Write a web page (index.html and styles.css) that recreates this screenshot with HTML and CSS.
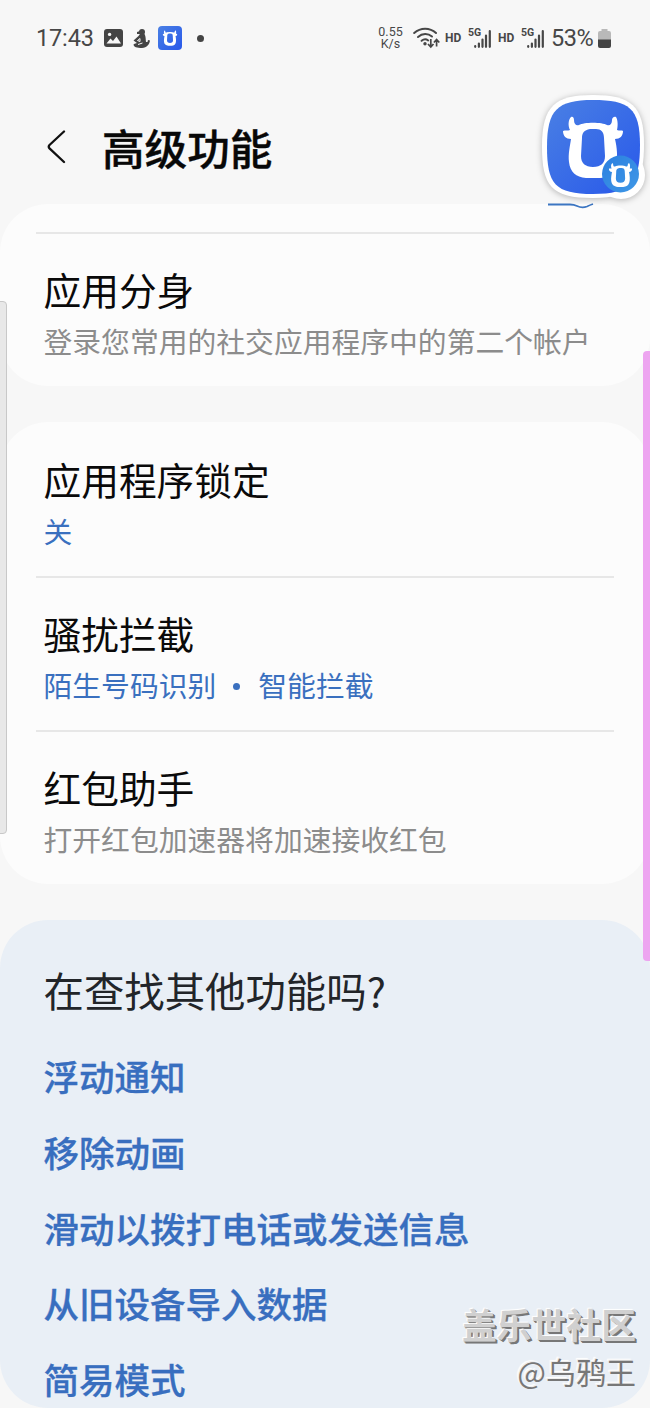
FILE: index.html
```html
<!DOCTYPE html>
<html lang="zh-CN">
<head>
<meta charset="utf-8">
<title>高级功能</title>
<link rel="stylesheet" href="styles.css">
</head>
<body>
<div class="screen">
  <svg class="defs" width="0" height="0" aria-hidden="true">
    <defs>
      <linearGradient id="blue" x1="0" y1="0" x2="1" y2="1"><stop offset="0" stop-color="#4a80e4"/><stop offset="1" stop-color="#2858ea"/></linearGradient>
      <linearGradient id="sky" x1="0" y1="0" x2="1" y2="1"><stop offset="0" stop-color="#2b7fe0"/><stop offset="1" stop-color="#3f98e6"/></linearGradient>
      <symbol id="bull" viewBox="0 0 60 62">
        <path fill="currentColor" fill-rule="evenodd" d="M8 1C10 0 11 2 11 4C11 8 13 10 16 9C21 6 39 6 44 9C47 10 49 8 49 4C49 2 51 0 53 1C55 4 55 10 54 14C56 15 59 14 60 15C60 20 57 23 52 23C54 31 55 42 53 50C51 58 45 62 37 62H23C13 61 7 56 6 46C5 38 7 30 8 23C3 23 0 20 0 15C2 14 5 15 7 14C5 10 5 4 8 1ZM27 13C21 14 19 17 19 22L18 40C18 47 22 51 30 51S42 47 42 40L41 22C41 16 38 13 33 13Z"/>
      </symbol>
      <symbol id="signal" viewBox="0 0 17 18">
        <path fill="none" stroke="#474747" stroke-width="2.2" stroke-linecap="round" d="M1.2 16.2V16.8M4.9 13.5V16.8M8.5 9.5V16.8M12 5.5V16.8M15.8 1.2V16.8"/>
      </symbol>
    </defs>
  </svg>

  <header class="status">
    <span class="clock">17:43</span>
    <svg class="i-photo" width="19" height="18" viewBox="0 0 19 18"><rect width="19" height="18" rx="3" fill="#444"/><path fill="#f7f7f7" d="M2.500 14.500L6.500 9.500L9 12L12.500 7.500L17 14.500Z"/><circle cx="5.600" cy="5.400" r="1.700" fill="#f7f7f7"/></svg>
    <svg class="i-figure" width="17" height="19" viewBox="0 0 17 19"><circle cx="9" cy="3" r="3" fill="#444"/><path fill="#444" d="M4 3L7 2V5L4 5ZM7 5H11.500C13 8 12.500 10 13 13L14.500 13L15 11L17 11.500C16.500 15 14 19 9 19C4 19 .5 18 .5 15.500Q1 14.500 4 14L.5 11.500L5.500 7Z"/><path fill="none" stroke="#f7f7f7" stroke-width="1" d="M4.500 11.500L7 9.500V12.500ZM5 15.500L9.500 14"/></svg>
    <svg class="i-app" width="24" height="24" viewBox="0 0 24 24"><rect width="24" height="24" rx="4" fill="url(#blue)"/><svg class="white" x="4.500" y="4" width="15" height="16"><use href="#bull"/></svg></svg>
    <span class="more-dot"></span>
    <span class="speed"><span>0.55</span><span>K/s</span></span>
    <svg class="i-wifi" width="27" height="22" viewBox="0 0 27 22"><g fill="none" stroke="#474747" stroke-width="2" stroke-linecap="round"><path d="M1.200 6C7.500 .2 16.800 .2 23 6"/><path d="M5 10C9.300 6.200 15 6.200 19 9.500"/><path d="M8.600 13.800C11 11.800 13 11.800 15.200 13.500"/></g><circle cx="12" cy="16.700" r="1.700" fill="#474747"/><path fill="none" stroke="#474747" stroke-width="1.700" d="M17.800 12V19.500M15 17L17.800 20L20.500 17M23.600 19.500V13M20.900 15.500L23.600 12.500L26.300 15.500"/></svg>
    <span class="hd hd-one">HD</span>
    <span class="cell cell-one"><span>5G</span><svg width="17" height="18"><use href="#signal"/></svg></span>
    <span class="hd hd-two">HD</span>
    <span class="cell cell-two"><span>5G</span><svg width="17" height="18"><use href="#signal"/></svg></span>
    <span class="percent">53%</span>
    <svg class="i-battery" width="13" height="19" viewBox="0 0 13 19"><path fill="#b9b9b9" d="M3.500 0H9.500V2H11Q13 2 13 4V11H0V4Q0 2 2 2H3.500Z"/><path fill="#444" d="M0 10.500H13V17Q13 19 11 19H2Q0 19 0 17Z"/></svg>
  </header>

  <div class="titlebar">
    <svg class="back" width="19" height="34" viewBox="0 0 19 34"><path fill="none" stroke="#111" stroke-width="2.300" stroke-linecap="round" stroke-linejoin="round" d="M17 1.500L2.500 15Q1 16.700 2.500 18.400L17 32"/></svg>
    <h1>高级功能</h1>
  </div>

  <main>
    <section class="card card-clipped">
      <svg class="switch-edge" width="46" height="6" viewBox="0 0 46 6"><path fill="none" stroke="#3c76c2" stroke-width="1.800" d="M0 1.500H22Q26 1.500 29 3Q34 5.500 39 3.500Q42 2 45 1"/></svg>
      <div class="row ruled"><h2>应用分身</h2><p>登录您常用的社交应用程序中的第二个帐户</p></div>
    </section>
    <section class="card">
      <div class="row"><h2>应用程序锁定</h2><p class="on">关</p></div>
      <div class="row ruled"><h2>骚扰拦截</h2><p class="on">陌生号码识别<span class="sep"></span>智能拦截</p></div>
      <div class="row ruled"><h2>红包助手</h2><p>打开红包加速器将加速接收红包</p></div>
    </section>
    <section class="card related">
      <h3>在查找其他功能吗?</h3>
      <a>浮动通知</a>
      <a>移除动画</a>
      <a>滑动以拨打电话或发送信息</a>
      <a>从旧设备导入数据</a>
      <a>简易模式</a>
    </section>
  </main>

  <div class="edge-left"></div>
  <div class="edge-right"></div>
  <svg class="floating" width="120" height="120" viewBox="0 0 120 120">
    <g fill="#fff"><path d="M60 7C98 7 111 18 111 56S102 110 60 110S9 98 9 58S22 7 60 7Z"/><circle cx="88" cy="87" r="24"/></g>
    <path fill="url(#blue)" d="M60 12C96 12 107 20 107 57S98 106 60 106S14 96 14 59S24 12 60 12Z"/>
    <svg class="white" x="30" y="28" width="60" height="62"><use href="#bull"/></svg>
    <circle cx="87.500" cy="86" r="18.500" fill="url(#sky)"/>
    <svg class="white" x="75" y="75" width="25" height="24"><use href="#bull"/></svg>
  </svg>
  <div class="watermark"><strong>盖乐世社区</strong><span>@乌鸦王</span></div>
</div>
</body>
</html>
```
FILE: styles.css
```css
* { box-sizing: border-box; }
body { margin: 0; font-family: "Noto Sans CJK SC", sans-serif; background: #f7f7f7; }
h1, h2, h3, p { margin: 0; font-weight: 400; white-space: nowrap; }
.screen { position: relative; width: 650px; height: 1408px; overflow: hidden; }
.defs { position: absolute; }
.white { color: #fff; }

.status { display: flex; align-items: center; height: 76px; padding-left: 36px; font-family: Roboto, sans-serif; color: #474747; white-space: nowrap; }
.status > * { flex: none; }
.clock { width: 68px; font-size: 23.500px; letter-spacing: -.15px; }
.i-figure { margin-left: 10px; }
.i-app { margin-left: 8px; }
.more-dot { width: 7px; height: 7px; margin-left: 15px; border-radius: 50%; background: #444; }
.speed { display: flex; flex-direction: column; align-items: center; width: 27px; margin-left: 173px; font-size: 12.500px; line-height: 12px; }
.i-wifi { margin-left: 9px; }
.hd { width: 17px; font-size: 12px; font-weight: 700; }
.hd-one { margin-left: 5px; }
.cell { display: flex; width: 25px; height: 20px; align-items: flex-end; }
.cell span { align-self: flex-start; width: 14px; font-size: 10.500px; line-height: 10px; font-weight: 700; }
.cell svg { flex: none; margin-left: -8px; }
.cell-one { margin-left: 6px; }
.hd-two { margin-left: 5px; }
.cell-two { margin-left: 6px; }
.percent { width: 43px; margin-left: 5px; font-size: 23.500px; letter-spacing: -.4px; }
.i-battery { margin-left: 4px; }

.titlebar { display: flex; align-items: center; height: 128px; padding: 0 0 0 47px; }
.back { margin-top: 14px; }
.titlebar h1 { margin: 14px 0 0 36px; font-size: 42.600px; line-height: 60px; font-weight: 500; color: #080808; -webkit-text-stroke: .4px #080808; }

main { display: flex; flex-direction: column; gap: 36px; }
.card { padding: 0 36px; border-radius: 48px; background: #fcfcfc; }
.card-clipped { height: 182px; padding-top: 28px; }
.switch-edge { position: absolute; left: 548px; top: 203px; }
.row { height: 154px; padding: 31px 0 0 7.500px; }
.ruled { border-top: 2px solid #e7e7e7; padding-top: 29px; }
.row h2 { font-size: 37.700px; line-height: 52px; color: #0a0a0a; }
.row p { margin-top: 6px; font-size: 28.800px; line-height: 40px; color: #8c8c8c; }
.row .on { color: #3a70bf; }
.sep { display: inline-block; width: 7px; height: 7px; margin: 0 18px 0 17px; border-radius: 50%; background: currentColor; vertical-align: 7px; }
.related { display: flex; flex-direction: column; height: 488px; padding: 42px 43.500px 0; background: #e9eff6; }
.related h3 { font-size: 40.400px; line-height: 56px; color: #222529; }
.related a { font-size: 35.500px; line-height: 75.800px; font-weight: 500; color: #386ebf; white-space: nowrap; -webkit-text-stroke: .3px #386ebf; }
.related h3 + a { margin-top: 20px; }

.edge-left { position: absolute; left: -4px; top: 301px; width: 11px; height: 533px; border: 1px solid #c8c8c8; border-radius: 4px; background: #e8e8e8; }
.edge-right { position: absolute; left: 643px; top: 351px; width: 12px; height: 610px; border-radius: 4px; background: #eda5f0; }
.floating { position: absolute; left: 533px; top: 88px; filter: drop-shadow(0 1px 3px rgba(0, 0, 0, .28)); }
.watermark { position: absolute; right: 14px; bottom: 14px; display: flex; flex-direction: column; align-items: flex-end; color: #d0d0d0; text-shadow: -1px -1px 1px #fff, 1px 1px 0 #777, 2px 2px 0 #777; white-space: nowrap; }
.watermark strong { font-size: 34.800px; line-height: 48px; font-weight: 700; }
.watermark span { font-size: 30px; line-height: 46px; color: #777; text-shadow: -1px -1px 0 #eee, -2px -2px 1px #fff; }
```
